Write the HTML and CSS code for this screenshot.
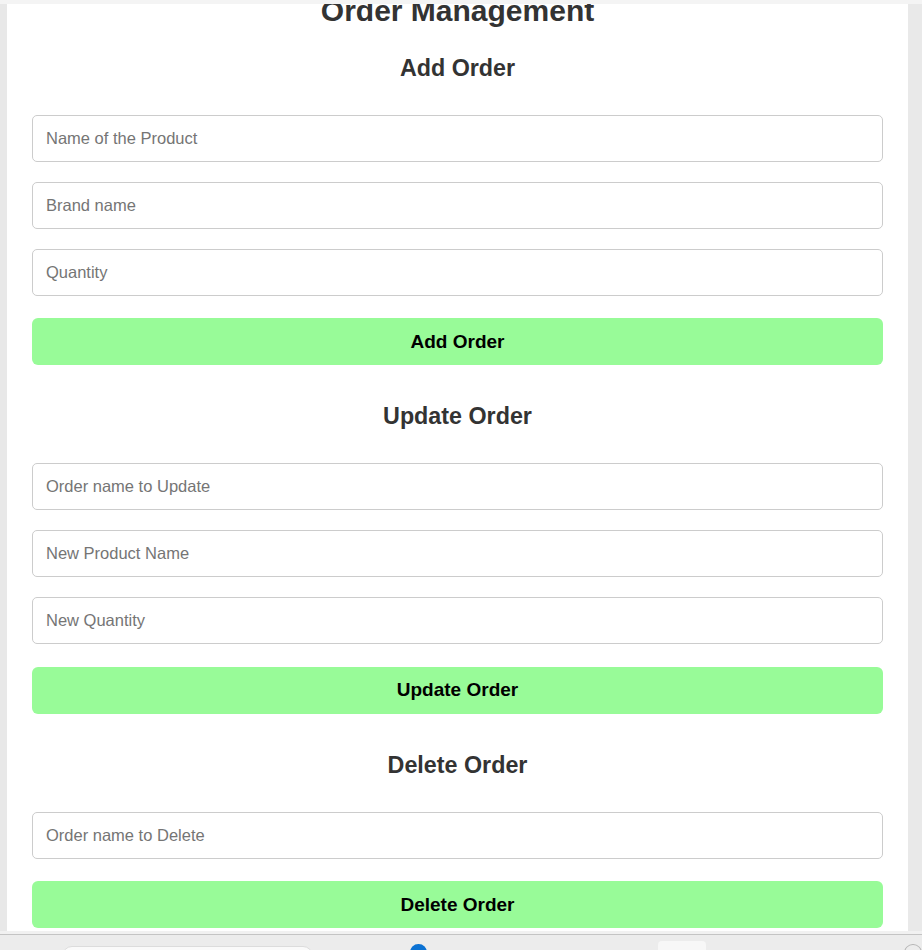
FILE: index.html
```
<!DOCTYPE html>
<html>
<head>
<meta charset="utf-8">
<title>Order Management</title>
<link rel="stylesheet" href="styles.css">
</head>
<body>
<div class="topline"></div>
<div class="viewport">
  <main class="card">
    <h1 class="title">Order Management</h1>
    <section class="section">
      <h2 class="section-title">Add Order</h2>
      <input class="field" type="text" placeholder="Name of the Product">
      <input class="field" type="text" placeholder="Brand name">
      <input class="field" type="text" placeholder="Quantity">
      <button class="btn">Add Order</button>
    </section>
    <section class="section">
      <h2 class="section-title">Update Order</h2>
      <input class="field" type="text" placeholder="Order name to Update">
      <input class="field" type="text" placeholder="New Product Name">
      <input class="field" type="text" placeholder="New Quantity">
      <button class="btn">Update Order</button>
    </section>
    <section class="section">
      <h2 class="section-title">Delete Order</h2>
      <input class="field" type="text" placeholder="Order name to Delete">
      <button class="btn">Delete Order</button>
    </section>
  </main>
  <div class="scroll-gutter"></div>
</div>
<div class="statusline"></div>
<div class="bottombar">
  <span class="pill"></span>
  <span class="dot"></span>
  <span class="tab"></span>
  <span class="ring"></span>
</div>
</body>
</html>
```
FILE: styles.css
```
* { box-sizing: border-box; }
html, body {
  margin: 0;
  padding: 0;
  height: 950px;
  overflow: hidden;
}
body {
  background: #e8e8e8;
  font-family: "Liberation Sans", Arial, sans-serif;
}
.topline {
  height: 4px;
  background: #f4f4f4;
}
.viewport {
  display: flex;
  height: 927px;
  padding-left: 7px;
  overflow: hidden;
}
.card {
  width: 901px;
  background: #ffffff;
  padding: 0 25px 5px;
  overflow: hidden;
}
.scroll-gutter {
  flex: 1;
  background: #e9e9e9;
}
.title {
  margin: -10px 0 0;
  font-size: 30px;
  line-height: 34px;
  text-align: center;
  color: #333333;
  font-weight: bold;
}
.section {
  display: flex;
  flex-direction: column;
}
.section:first-of-type .section-title { margin-top: 25.5px; }
.section + .section { margin-top: 37px; }
.section-title {
  margin: 0 0 33px;
  font-size: 23.3px;
  line-height: 28px;
  text-align: center;
  color: #333333;
  font-weight: bold;
}
.field {
  display: block;
  width: 100%;
  height: 47px;
  margin: 0 0 20px;
  padding: 0 13px;
  border: 1px solid #cccccc;
  border-radius: 5px;
  font-family: "Liberation Sans", Arial, sans-serif;
  font-size: 16.5px;
  color: #333;
  background: #fff;
}
.field::placeholder { color: #757575; }
.btn {
  display: block;
  width: 100%;
  height: 47px;
  margin-top: 2.5px;
  border: none;
  border-radius: 6px;
  background: #98fb98;
  color: #000;
  font-family: "Liberation Sans", Arial, sans-serif;
  font-size: 19px;
  font-weight: bold;
}
.statusline {
  height: 4px;
  background: #f1f1f1;
  border-bottom: 1px solid #c4c4c4;
}
.bottombar {
  height: 15px;
  background: #ececec;
  display: flex;
  align-items: flex-start;
  overflow: hidden;
}
.pill {
  margin: 11px 0 0 62px;
  width: 256px;
  height: 20px;
  background: #fafafa;
  border: 1px solid #dcdcdc;
  border-radius: 10px;
}
.dot {
  margin: 9px 0 0 97px;
  width: 17px;
  height: 17px;
  border-radius: 50%;
  background: #0b72d3;
}
.tab {
  margin: 6px 0 0 231px;
  width: 49px;
  height: 20px;
  background: #f7f7f7;
  border-radius: 4px;
}
.ring {
  margin: 9px 0 0 198px;
  width: 18px;
  height: 18px;
  border: 1px solid #b5b5b5;
  border-radius: 50%;
}
```
